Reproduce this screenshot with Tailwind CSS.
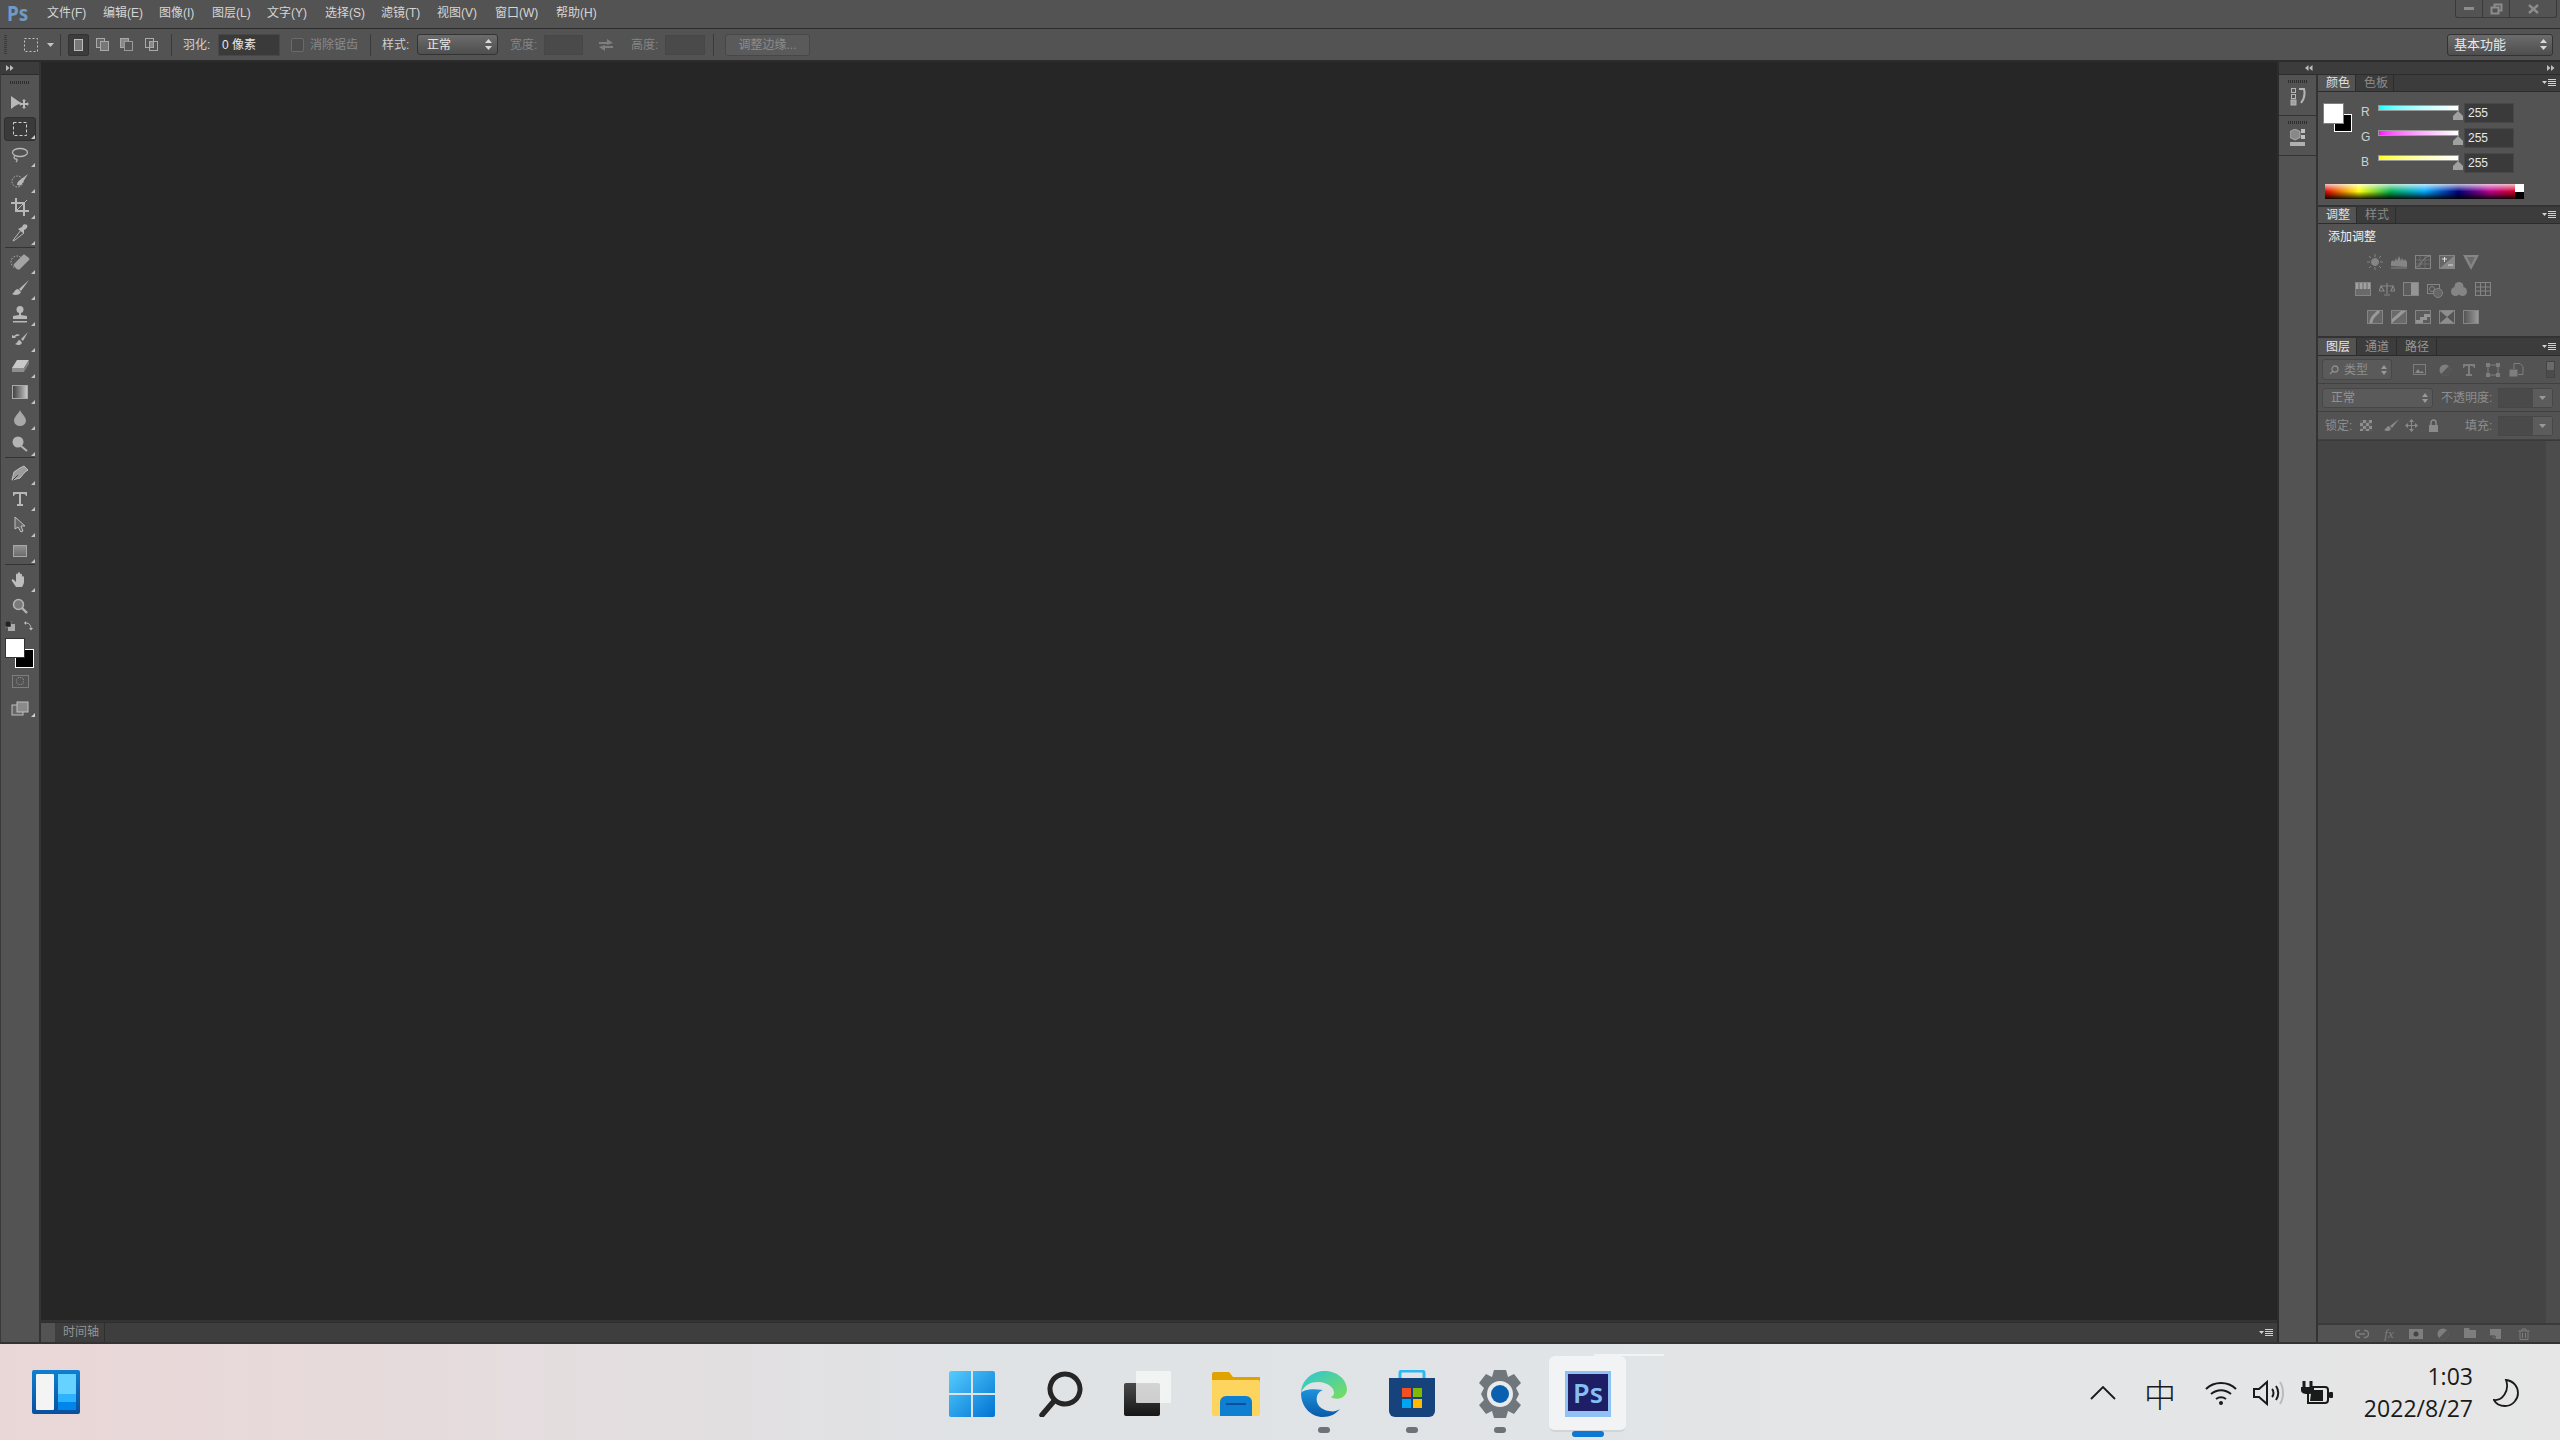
<!DOCTYPE html>
<html lang="zh-CN">
<head>
<meta charset="UTF-8">
<title>Photoshop</title>
<script src="https://cdn.jsdelivr.net/npm/@tailwindcss/browser@4"></script>
</head>
<body class="w-[2560px] h-[1440px] overflow-hidden bg-[#262626] font-['Liberation_Sans','Noto_Sans_CJK_SC',sans-serif] text-[12px] text-[#c8c8c8]">
<div class="flex flex-col h-full">

  <!-- title bar -->
  <header class="relative h-[29px] shrink-0 flex items-start bg-[#535353] border-b border-[#2c2c2c]">
    <span class="ml-[7px] w-[40px] leading-[26px] text-[21px] font-bold text-[#6f9cc4] font-['Noto_Sans',sans-serif] scale-x-90 origin-left">Ps</span>
    <nav class="flex leading-[27px] text-[#d6d6d6]">
      <span class="w-[56px]">文件(F)</span>
      <span class="w-[56px]">编辑(E)</span>
      <span class="w-[53px]">图像(I)</span>
      <span class="w-[55px]">图层(L)</span>
      <span class="w-[58px]">文字(Y)</span>
      <span class="w-[56px]">选择(S)</span>
      <span class="w-[56px]">滤镜(T)</span>
      <span class="w-[58px]">视图(V)</span>
      <span class="w-[61px]">窗口(W)</span>
      <span>帮助(H)</span>
    </nav>
    <div class="ml-auto mr-[3px] w-[102px] h-[18px] flex border border-t-0 border-[#3a3a3a] rounded-b-[3px]">
      <div class="w-[27px] flex items-center justify-center border-r border-[#3a3a3a]"><div class="w-[10px] h-[3px] bg-[#8c8c8c]"></div></div>
      <div class="w-[27px] flex items-center justify-center border-r border-[#3a3a3a]">
        <svg width="13" height="12" viewBox="0 0 13 12" fill="none" stroke="#8c8c8c" stroke-width="2"><rect x="4.5" y="1.5" width="7" height="6"/><rect x="1.5" y="4.5" width="7" height="6" fill="#535353"/></svg>
      </div>
      <div class="flex-1 flex items-center justify-center">
        <svg width="11" height="10" viewBox="0 0 11 10" stroke="#8c8c8c" stroke-width="2.4"><path d="M1 1l9 8M10 1l-9 8"/></svg>
      </div>
    </div>
  </header>

  <!-- options bar -->
  <div class="h-[33px] shrink-0 flex items-center bg-[#535353] border-b-2 border-[#2c2c2c] text-[#d0d0d0]">
    <div class="ml-[4px] w-[3px] h-[20px] bg-[repeating-linear-gradient(180deg,#3a3a3a_0,#3a3a3a_1px,transparent_1px,transparent_2px)]"></div>
    <svg class="ml-[17px]" width="14" height="14" viewBox="0 0 14 14" fill="none" stroke="#c4c4c4" stroke-dasharray="2 2"><rect x=".5" y=".5" width="13" height="13"/></svg>
    <svg class="ml-[9px]" width="7" height="4" viewBox="0 0 7 4"><path d="M0 0h7L3.500 4z" fill="#c4c4c4"/></svg>
    <div class="ml-[6px] w-px h-[22px] bg-[#3a3a3a]"></div>
    <div class="ml-[7px] w-[21px] h-[22px] flex items-center justify-center bg-[#3c3c3c] rounded-[2px] border border-[#333]">
      <div class="w-[9px] h-[12px] bg-[#777] border border-[#bbb]"></div>
    </div>
    <svg class="ml-[7px]" width="14" height="14" viewBox="0 0 14 14"><rect x=".5" y=".5" width="8" height="9" fill="#666" stroke="#aaa"/><rect x="4.500" y="3.500" width="8" height="9" fill="#777" stroke="#aaa"/></svg>
    <svg class="ml-[10px]" width="14" height="14" viewBox="0 0 14 14"><rect x=".5" y=".5" width="8" height="9" fill="#888" stroke="#aaa"/><rect x="4.500" y="3.500" width="8" height="9" fill="#555" stroke="#999"/></svg>
    <svg class="ml-[11px]" width="14" height="14" viewBox="0 0 14 14" fill="none" stroke="#aaa"><rect x=".5" y=".5" width="8" height="9"/><rect x="4.500" y="3.500" width="8" height="9"/><rect x="5" y="4" width="3" height="5" fill="#888" stroke="none"/></svg>
    <div class="ml-[12px] w-px h-[22px] bg-[#3a3a3a]"></div>
    <span class="ml-[11px] w-[35px]">羽化:</span>
    <div class="w-[62px] h-[22px] flex items-center pl-[3px] bg-[#3a3a3a] border border-[#474747] text-[#e8e8e8]">0 像素</div>
    <div class="ml-[11px] w-[13px] h-[14px] rounded-[2px] border border-[#6a6a6a] bg-[#4c4c4c]"></div>
    <span class="ml-[6px] w-[48px] whitespace-nowrap text-[#8a8a8a]">消除锯齿</span>
    <div class="ml-[12px] w-px h-[22px] bg-[#3a3a3a]"></div>
    <span class="ml-[11px] w-[35px]">样式:</span>
    <div class="w-[81px] h-[21px] flex items-center justify-between px-[9px] pr-[5px] rounded-[3px] border border-[#333] bg-linear-to-b from-[#6c6c6c] to-[#4e4e4e] text-[#e8e8e8]">
      <span>正常</span>
      <svg width="7" height="11" viewBox="0 0 7 11" fill="#d8d8d8"><path d="M3.500 0L7 4H0zM3.500 11L0 7h7z"/></svg>
    </div>
    <span class="ml-[12px] w-[34px] text-[#858585]">宽度:</span>
    <div class="w-[39px] h-[20px] bg-[#4a4a4a] border border-[#474747]"></div>
    <svg class="ml-[16px]" width="14" height="18" viewBox="0 0 14 18" fill="#7e7e7e"><path d="M0 6h8V3l6 4-6 2V8H0zM14 12H6v3L0 11l6-2v1h8z"/></svg>
    <span class="ml-[18px] w-[34px] text-[#858585]">高度:</span>
    <div class="w-[40px] h-[20px] bg-[#4a4a4a] border border-[#474747]"></div>
    <div class="ml-[8px] w-px h-[22px] bg-[#3a3a3a]"></div>
    <div class="ml-[11px] w-[85px] h-[22px] flex items-center justify-center rounded-[3px] border border-[#474747] bg-[#5a5a5a] text-[#8c8c8c]">调整边缘...</div>
    <div class="ml-auto mr-[7px] w-[106px] h-[22px] flex items-center justify-between pl-[6px] pr-[5px] rounded-[3px] border border-[#333] bg-linear-to-b from-[#6c6c6c] to-[#4e4e4e] text-[#e8e8e8] text-[13px]">
      <span>基本功能</span>
      <svg width="7" height="11" viewBox="0 0 7 11" fill="#d8d8d8"><path d="M3.500 0L7 4H0zM3.500 11L0 7h7z"/></svg>
    </div>
  </div>

  <!-- workspace -->
  <main class="h-[1282px] shrink-0 flex pb-[2px] bg-[#333]">

    <!-- tools -->
    <aside class="w-[41px] shrink-0 flex flex-col bg-[#535353] border-l border-[#3a3a3a] border-r-2 border-r-[#333] text-[#b8b8b8]">
      <div class="h-[13px] shrink-0 pl-[5px] pt-[3px] bg-[#3c3c3c] border-b border-[#2c2c2c]">
        <svg width="8" height="6" viewBox="0 0 8 6" fill="#bdbdbd"><path d="M0 0l3.500 3L0 6zM4 0l3.500 3L4 6z"/></svg>
      </div>
      <div class="h-[15px] shrink-0 flex items-center justify-center"><div class="w-[20px] h-[3px] bg-[repeating-linear-gradient(90deg,#2e2e2e_0,#2e2e2e_1px,transparent_1px,transparent_2px)]"></div></div>

      <div class="h-[26px] flex items-center justify-center">
        <svg width="20" height="16" viewBox="0 0 20 16" fill="#b8b8b8"><path d="M1 1l0 13 4-3 6-3z"/><path d="M14 4l2 2h-1v2h2V7l2 2-2 2v-1h-2v2h1l-2 2-2-2h1v-2h-2v1l-2-2 2-2v1h2V6h-1z"/></svg>
      </div>
      <div class="relative h-[26px] flex items-center justify-center">
        <div class="w-[32px] h-[24px] rounded-[3px] bg-[#3a3a3a] border border-[#2f2f2f] flex items-center justify-center">
          <svg width="14" height="14" viewBox="0 0 14 14" fill="none" stroke="#d0d0d0" stroke-width="1" stroke-dasharray="3 2"><rect x=".5" y=".5" width="13" height="13"/></svg>
        </div>
        <svg class="absolute right-[4px] bottom-[3px]" width="4" height="4" viewBox="0 0 4 4"><path d="M4 0v4H0z" fill="#d0d0d0"/></svg>
      </div>
      <div class="relative h-[26px] flex items-center justify-center">
        <svg width="18" height="16" viewBox="0 0 18 16" fill="none" stroke="#b8b8b8" stroke-width="1.300"><ellipse cx="9" cy="5.500" rx="7.500" ry="4"/><path d="M4 9c-2 1-1 3 1 3s1 2 0 3"/></svg>
        <svg class="absolute right-[4px] bottom-[1px]" width="4" height="4" viewBox="0 0 4 4"><path d="M4 0v4H0z" fill="#c4c4c4"/></svg>
      </div>
      <div class="relative h-[26px] flex items-center justify-center">
        <svg width="18" height="16" viewBox="0 0 18 16"><circle cx="6.500" cy="8.500" r="5.500" fill="none" stroke="#b8b8b8" stroke-dasharray="1.500 1.500"/><path d="M17 1L9 7c-2 1-3 3-3 5 3 1 5 0 6-3z" fill="#b8b8b8"/></svg>
        <svg class="absolute right-[4px] bottom-[1px]" width="4" height="4" viewBox="0 0 4 4"><path d="M4 0v4H0z" fill="#c4c4c4"/></svg>
      </div>
      <div class="relative h-[26px] flex items-center justify-center">
        <svg width="18" height="18" viewBox="0 0 18 18" fill="none" stroke="#b8b8b8" stroke-width="2"><path d="M5 0v13h13M0 5h13v13"/><path d="M5 13L16 2" stroke-width="1"/></svg>
        <svg class="absolute right-[4px] bottom-[1px]" width="4" height="4" viewBox="0 0 4 4"><path d="M4 0v4H0z" fill="#c4c4c4"/></svg>
      </div>
      <div class="relative h-[26px] flex items-center justify-center">
        <svg width="16" height="18" viewBox="0 0 16 18"><path d="M9 6l-7 9-1 2 2-1 9-7z" fill="none" stroke="#b8b8b8"/><path d="M8 4l2-1 1-2c1-1 3-1 4 0s0 3-1 4l-2 1 0 2-1 1-5-4z" fill="#b8b8b8"/></svg>
        <svg class="absolute right-[4px] bottom-[1px]" width="4" height="4" viewBox="0 0 4 4"><path d="M4 0v4H0z" fill="#c4c4c4"/></svg>
      </div>
      <div class="h-[3px] flex items-end pb-[1px] px-[4px]"><div class="w-full h-px bg-[#333]"></div></div>

      <div class="relative h-[26px] flex items-center justify-center">
        <svg width="20" height="16" viewBox="0 0 20 16"><circle cx="7" cy="8" r="6" fill="none" stroke="#b8b8b8" stroke-dasharray="1.500 1.500"/><path d="M15 1l4 3c1 1 0 2-1 3l-8 8c-1 1-2 1-3 0l-3-3c-1-1 0-2 1-3l7-7c1-1 2-2 3-1z" fill="#a4a4a4"/></svg>
        <svg class="absolute right-[4px] bottom-[1px]" width="4" height="4" viewBox="0 0 4 4"><path d="M4 0v4H0z" fill="#c4c4c4"/></svg>
      </div>
      <div class="relative h-[26px] flex items-center justify-center">
        <svg width="20" height="16" viewBox="0 0 20 16" fill="#b8b8b8"><path d="M19 0l-10 9 2 2z"/><path d="M8 9c-3 0-3 3-6 5 3 2 8 1 9-2z"/></svg>
        <svg class="absolute right-[4px] bottom-[1px]" width="4" height="4" viewBox="0 0 4 4"><path d="M4 0v4H0z" fill="#c4c4c4"/></svg>
      </div>
      <div class="relative h-[26px] flex items-center justify-center">
        <svg width="16" height="17" viewBox="0 0 16 17" fill="#b8b8b8"><circle cx="8" cy="3.500" r="3.500"/><path d="M7 6h2v3l6 1v3H1v-3l6-1zM1 15h14v1.500H1z"/></svg>
        <svg class="absolute right-[4px] bottom-[1px]" width="4" height="4" viewBox="0 0 4 4"><path d="M4 0v4H0z" fill="#c4c4c4"/></svg>
      </div>
      <div class="relative h-[26px] flex items-center justify-center">
        <svg width="18" height="16" viewBox="0 0 18 16" fill="#b8b8b8"><path d="M17 0l-7 7 2 2zM9 8c-3 0-2 3-5 4 3 2 6 1 7-1z"/><path d="M1 3l2 1c2-2 4-2 6-1l-2 1c-1 0-2 0-3 1l1 1-4 0z"/></svg>
        <svg class="absolute right-[4px] bottom-[1px]" width="4" height="4" viewBox="0 0 4 4"><path d="M4 0v4H0z" fill="#c4c4c4"/></svg>
      </div>
      <div class="relative h-[26px] flex items-center justify-center">
        <svg width="18" height="14" viewBox="0 0 18 14"><path d="M6 1h12l-5 8H1z" fill="#c8c8c8"/><path d="M1 9h12v4H1z" fill="#8e8e8e"/><path d="M13 9l5-8v4l-5 8z" fill="#7e7e7e"/></svg>
        <svg class="absolute right-[4px] bottom-[1px]" width="4" height="4" viewBox="0 0 4 4"><path d="M4 0v4H0z" fill="#c4c4c4"/></svg>
      </div>
      <div class="relative h-[26px] flex items-center justify-center">
        <div class="w-[16px] h-[14px] border border-[#aaa] bg-linear-to-r from-[#444] to-[#c8c8c8]"></div>
        <svg class="absolute right-[4px] bottom-[1px]" width="4" height="4" viewBox="0 0 4 4"><path d="M4 0v4H0z" fill="#c4c4c4"/></svg>
      </div>
      <div class="relative h-[26px] flex items-center justify-center">
        <svg width="12" height="16" viewBox="0 0 12 16"><path d="M6 0c1 3 6 7 6 10.500A6 5.500 0 0 1 0 10.500C0 7 5 3 6 0z" fill="#a8a8a8"/></svg>
        <svg class="absolute right-[4px] bottom-[1px]" width="4" height="4" viewBox="0 0 4 4"><path d="M4 0v4H0z" fill="#c4c4c4"/></svg>
      </div>
      <div class="relative h-[26px] flex items-center justify-center">
        <svg width="16" height="16" viewBox="0 0 16 16"><circle cx="6" cy="6" r="5.500" fill="#b4b4b4"/><path d="M9 10l6 5" stroke="#b4b4b4" stroke-width="2"/></svg>
        <svg class="absolute right-[4px] bottom-[1px]" width="4" height="4" viewBox="0 0 4 4"><path d="M4 0v4H0z" fill="#c4c4c4"/></svg>
      </div>
      <div class="h-[3px] flex items-start px-[4px]"><div class="w-full h-px bg-[#333]"></div></div>

      <div class="relative h-[26px] flex items-center justify-center">
        <svg width="18" height="16" viewBox="0 0 18 16"><path d="M13 1l4 4-3 2-5 6-8 2 2-8 6-4z" fill="#9c9c9c" stroke="#c0c0c0"/><path d="M2 15l5-5" stroke="#444"/></svg>
        <svg class="absolute right-[4px] bottom-[1px]" width="4" height="4" viewBox="0 0 4 4"><path d="M4 0v4H0z" fill="#c4c4c4"/></svg>
      </div>
      <div class="relative h-[26px] flex items-center justify-center">
        <svg width="14" height="14" viewBox="0 0 14 14" fill="#b8b8b8"><path d="M0 0h14v4h-1c0-1-1-2-2-2H8v10h2v2H4v-2h2V2H3C2 2 1 3 1 4H0z"/></svg>
        <svg class="absolute right-[4px] bottom-[1px]" width="4" height="4" viewBox="0 0 4 4"><path d="M4 0v4H0z" fill="#c4c4c4"/></svg>
      </div>
      <div class="relative h-[26px] flex items-center justify-center">
        <svg width="12" height="16" viewBox="0 0 12 16"><path d="M1 0l10 9H7l2 5-2 1-3-5-3 2z" fill="#666" stroke="#c0c0c0"/></svg>
        <svg class="absolute right-[4px] bottom-[1px]" width="4" height="4" viewBox="0 0 4 4"><path d="M4 0v4H0z" fill="#c4c4c4"/></svg>
      </div>
      <div class="relative h-[26px] flex items-center justify-center">
        <div class="w-[14px] h-[12px] border border-[#a8a8a8] bg-linear-to-b from-[#909090] to-[#6c6c6c]"></div>
        <svg class="absolute right-[4px] bottom-[1px]" width="4" height="4" viewBox="0 0 4 4"><path d="M4 0v4H0z" fill="#c4c4c4"/></svg>
      </div>
      <div class="h-[3px] flex items-start px-[4px]"><div class="w-full h-px bg-[#333]"></div></div>

      <div class="relative h-[26px] flex items-center justify-center">
        <svg width="18" height="16" viewBox="0 0 18 16" fill="#bdbdbd"><path d="M5 15L1 9c-1-2 1-2 2-1l2 2 0-7c0-2 2-2 2 0V1c0-1 2-1 2 0v2c0-2 2-1 2 0v2c0-1 2-1 2 0v5c0 2-1 3-2 5z"/></svg>
        <svg class="absolute right-[4px] bottom-[1px]" width="4" height="4" viewBox="0 0 4 4"><path d="M4 0v4H0z" fill="#c4c4c4"/></svg>
      </div>
      <div class="h-[26px] flex items-center justify-center">
        <svg width="16" height="16" viewBox="0 0 16 16"><circle cx="6.500" cy="6.500" r="5" fill="#7a7a7a" stroke="#b4b4b4" stroke-width="1.500"/><path d="M10 10l5 5" stroke="#b4b4b4" stroke-width="2.400"/></svg>
      </div>
      <div class="h-[14px] shrink-0 flex justify-between items-center pl-[4px] pr-[6px]">
        <svg width="10" height="10" viewBox="0 0 10 10"><rect x="3" y="3" width="7" height="7" fill="#aaa"/><rect x="0" y="0" width="6" height="6" fill="#222" stroke="#aaa" stroke-width=".5"/></svg>
        <svg width="9" height="10" viewBox="0 0 9 10" fill="none" stroke="#c0c0c0"><path d="M2 2c3 0 5 2 5 6"/><path d="M0 2l2-2v4zM5 7h4L7 9.500z" fill="#c0c0c0" stroke="none"/></svg>
      </div>
      <div class="relative h-[36px] shrink-0">
        <div class="absolute left-[14px] top-[16px] w-[19px] h-[19px] bg-black border border-white"></div>
        <div class="absolute left-[4px] top-[5px] w-[20px] h-[20px] bg-white border border-[#333]"></div>
      </div>
      <div class="h-[24px] shrink-0 flex items-center justify-center">
        <div class="w-[17px] h-[13px] border border-[#7e7e7e] flex items-center justify-center"><div class="w-[8px] h-[8px] rounded-full border border-dotted border-[#9a9a9a]"></div></div>
      </div>
      <div class="relative h-[30px] shrink-0 flex items-center justify-center">
        <svg width="18" height="15" viewBox="0 0 18 15"><rect x="1" y="4" width="11" height="10" fill="#666" stroke="#c0c0c0"/><rect x="6" y="1" width="11" height="10" fill="#8a8a8a" stroke="#c0c0c0"/></svg>
        <svg class="absolute right-[4px] bottom-[6px]" width="4" height="4" viewBox="0 0 4 4"><path d="M4 0v4H0z" fill="#d0d0d0"/></svg>
      </div>
    </aside>

    <!-- canvas + timeline -->
    <section class="flex-1 min-w-0 flex flex-col border-r-2 border-[#2c2c2c]">
      <div class="flex-1 bg-[#262626] border-b-2 border-[#333]"></div>
      <div class="h-[20px] shrink-0 flex items-stretch bg-[#3e3e3e] border-t border-[#2f2f2f]">
        <div class="w-[14px] bg-[#535353]"></div>
        <div class="w-[50px] pl-[8px] leading-[18px] bg-[#3e3e3e] border-r border-[#2f2f2f] text-[#949494]">时间轴</div>
        <svg class="ml-auto mr-[4px] self-center" width="14" height="8" viewBox="0 0 14 8" fill="#d0d0d0"><path d="M0 2h5L2.500 5zM6 0h8v1H6zM6 2h8v1H6zM6 4h8v1H6zM6 6h8v1H6z"/></svg>
      </div>
    </section>

    <!-- right dock -->
    <aside class="w-[281px] shrink-0 flex flex-col bg-[#333] text-[#d0d0d0]">
      <div class="h-[13px] shrink-0 flex items-center justify-between pl-[26px] pr-[5px] bg-[#3c3c3c] border-b border-[#2c2c2c]">
        <svg width="8" height="6" viewBox="0 0 8 6" fill="#bdbdbd"><path d="M3.500 0v6L0 3zM7.500 0v6L4 3z"/></svg>
        <svg width="8" height="6" viewBox="0 0 8 6" fill="#bdbdbd"><path d="M0 0l3.500 3L0 6zM4 0l3.500 3L4 6z"/></svg>
      </div>
      <div class="flex-1 min-h-0 flex">

        <!-- collapsed icons -->
        <div class="w-[39px] shrink-0 flex flex-col bg-[#535353] border-r-2 border-[#333]">
          <div class="h-[41px] border-b border-[#333] flex flex-col items-center pt-[5px] gap-[5px]">
            <div class="w-[20px] h-[3px] bg-[repeating-linear-gradient(90deg,#2e2e2e_0,#2e2e2e_1px,transparent_1px,transparent_2px)]"></div>
            <svg width="16" height="18" viewBox="0 0 16 18" fill="none" stroke="#b4b4b4"><rect x="1.500" y=".5" width="4" height="4"/><rect x="1.500" y="6.500" width="4" height="4"/><rect x="1" y="12" width="5" height="5" fill="#a0a0a0"/><path d="M9 1h5c1 4 1 9-3 14" stroke-width="2"/></svg>
          </div>
          <div class="h-[40px] border-b border-[#333] flex flex-col items-center pt-[5px] gap-[5px]">
            <div class="w-[20px] h-[3px] bg-[repeating-linear-gradient(90deg,#2e2e2e_0,#2e2e2e_1px,transparent_1px,transparent_2px)]"></div>
            <svg width="16" height="18" viewBox="0 0 16 18"><path d="M5 0l5 2.500v6L5 11 0 8.500v-6z" fill="#888" stroke="#c0c0c0" stroke-width=".7"/><rect x="11" y="0" width="4" height="4" fill="#c0c0c0"/><rect x="11" y="6" width="4" height="4" fill="#c0c0c0"/><rect x="0" y="13" width="15" height="4" fill="#b0b0b0"/></svg>
          </div>
        </div>

        <div class="flex-1 min-w-0 flex flex-col gap-[2px]">

          <!-- colour panel -->
          <div class="h-[130px] shrink-0 flex flex-col bg-[#535353]">
            <div class="h-[17px] shrink-0 flex bg-[#3c3c3c] border-b border-[#2c2c2c]">
              <div class="w-[38px] pl-[8px] leading-[17px] bg-[#535353] text-[#e0e0e0] border-r border-[#2c2c2c]">颜色</div>
              <div class="w-[38px] pl-[8px] leading-[17px] text-[#8a8a8a] border-r border-[#2c2c2c]">色板</div>
              <svg class="ml-auto mr-[4px] self-center" width="14" height="8" viewBox="0 0 14 8" fill="#d0d0d0"><path d="M0 2h5L2.500 5zM6 0h8v1H6zM6 2h8v1H6zM6 4h8v1H6zM6 6h8v1H6z"/></svg>
            </div>
            <div class="relative flex-1 pl-[43px] pt-[11px] flex flex-col gap-[5px]">
              <div class="absolute left-[16px] top-[22px] w-[18px] h-[18px] bg-black border border-white"></div>
              <div class="absolute left-[5px] top-[11px] w-[21px] h-[21px] bg-white border border-[#808080]"></div>

              <div class="h-[20px] flex items-center">
                <span class="w-[17px] -mt-[3px]">R</span>
                <div class="relative self-start mt-[2px] w-[81px] h-[6px] border border-[#999] bg-linear-to-r from-[#00ffff] to-white">
                  <svg class="absolute -right-[5px] top-[5px]" width="10" height="9" viewBox="0 0 10 9"><path d="M5 0l5 5v4H0V5z" fill="#a0a0a0"/></svg>
                </div>
                <div class="ml-[5px] w-[50px] h-[20px] flex items-center pl-[3px] bg-[#3a3a3a] border border-[#474747] text-[#e8e8e8]">255</div>
              </div>
              <div class="h-[20px] flex items-center">
                <span class="w-[17px] -mt-[3px]">G</span>
                <div class="relative self-start mt-[2px] w-[81px] h-[6px] border border-[#999] bg-linear-to-r from-[#ff00ff] to-white">
                  <svg class="absolute -right-[5px] top-[5px]" width="10" height="9" viewBox="0 0 10 9"><path d="M5 0l5 5v4H0V5z" fill="#a0a0a0"/></svg>
                </div>
                <div class="ml-[5px] w-[50px] h-[20px] flex items-center pl-[3px] bg-[#3a3a3a] border border-[#474747] text-[#e8e8e8]">255</div>
              </div>
              <div class="h-[20px] flex items-center">
                <span class="w-[17px] -mt-[3px]">B</span>
                <div class="relative self-start mt-[2px] w-[81px] h-[6px] border border-[#999] bg-linear-to-r from-[#ffff00] to-white">
                  <svg class="absolute -right-[5px] top-[5px]" width="10" height="9" viewBox="0 0 10 9"><path d="M5 0l5 5v4H0V5z" fill="#a0a0a0"/></svg>
                </div>
                <div class="ml-[5px] w-[50px] h-[20px] flex items-center pl-[3px] bg-[#3a3a3a] border border-[#474747] text-[#e8e8e8]">255</div>
              </div>
              <div class="absolute left-[7px] top-[92px] w-[199px] h-[15px] flex bg-[linear-gradient(90deg,#e00000_0%,#ffff00_17%,#00b050_33%,#00aaff_50%,#000080_67%,#c00090_83%,#e00000_100%)]">
                <div class="flex-1 bg-[linear-gradient(180deg,rgba(255,255,255,.75)_0%,rgba(255,255,255,0)_50%,rgba(0,0,0,0)_50%,rgba(0,0,0,.9)_100%)]"></div>
                <div class="w-[9px] flex flex-col"><div class="flex-1 bg-white"></div><div class="flex-1 bg-black"></div></div>
              </div>
            </div>
          </div>

          <!-- adjustments panel -->
          <div class="h-[129px] shrink-0 flex flex-col bg-[#535353]">
            <div class="h-[17px] shrink-0 flex bg-[#3c3c3c] border-b border-[#2c2c2c]">
              <div class="w-[39px] pl-[8px] leading-[17px] bg-[#535353] text-[#e0e0e0] border-r border-[#2c2c2c]">调整</div>
              <div class="w-[39px] pl-[8px] leading-[17px] text-[#8a8a8a] border-r border-[#2c2c2c]">样式</div>
              <svg class="ml-auto mr-[4px] self-center" width="14" height="8" viewBox="0 0 14 8" fill="#d0d0d0"><path d="M0 2h5L2.500 5zM6 0h8v1H6zM6 2h8v1H6zM6 4h8v1H6zM6 6h8v1H6z"/></svg>
            </div>
            <div class="pl-[10px] pt-[5px] leading-[16px] text-[#f0f0f0]">添加调整</div>
            <div class="w-[210px] mt-[9px] flex flex-col items-center gap-[12px]">
              <div class="flex gap-[8px]">
                <svg width="16" height="16" viewBox="0 0 16 16" fill="none" stroke="#858585"><circle cx="8" cy="8" r="3.500" fill="#858585"/><path d="M8 0v3M8 13v3M0 8h3M13 8h3M2 2l2 2M12 12l2 2M14 2l-2 2M2 14l2-2"/></svg>
                <svg width="16" height="16" viewBox="0 0 16 16"><path d="M0 12V8l2-2 1 2 2-4 1 3 2-5 2 5 1-3 2 3 1-2 2 3v5z" fill="#858585"/><path d="M0 14h16" stroke="#858585"/></svg>
                <svg width="16" height="16" viewBox="0 0 16 16" fill="none" stroke="#858585"><rect x=".5" y="1.500" width="15" height="13"/><path d="M1 13c6 0 5-10 14-11"/><path d="M5 2v12M10 2v12M1 6h14M1 10h14" stroke-opacity=".5"/></svg>
                <svg width="16" height="16" viewBox="0 0 16 16"><rect x=".5" y="1.500" width="15" height="13" fill="#666" stroke="#858585"/><path d="M1 14L15 2v12z" fill="#888"/><path d="M3 5h5M5.500 3v5M9 11h5" stroke="#ddd"/></svg>
                <svg width="16" height="16" viewBox="0 0 16 16"><path d="M0 1h16L8 16z" fill="#858585"/><path d="M4 3h8L8 11z" fill="#6a6a6a"/></svg>
              </div>
              <div class="flex gap-[8px]">
                <svg width="16" height="14" viewBox="0 0 16 14"><rect x=".5" y=".5" width="15" height="13" fill="#6a6a6a" stroke="#858585"/><path d="M1 1h14v6H1z" fill="#a0a0a0"/><path d="M4 1v6M8 1v6M12 1v6" stroke="#666"/></svg>
                <svg width="16" height="14" viewBox="0 0 16 14" fill="none" stroke="#858585"><path d="M8 1v11M5 13h6M2 4h12M2 4L0 9h5zM14 4l-2 5h4z" stroke-width="1.200"/></svg>
                <svg width="16" height="14" viewBox="0 0 16 14"><rect x=".5" y=".5" width="15" height="13" fill="#5c5c5c" stroke="#858585"/><rect x="8" y="1" width="7" height="12" fill="#959595"/></svg>
                <svg width="16" height="16" viewBox="0 0 16 16" fill="none" stroke="#858585"><rect x=".5" y="2.500" width="12" height="9"/><circle cx="5" cy="7" r="2.500"/><circle cx="11" cy="11" r="4.500" fill="#666"/></svg>
                <svg width="16" height="14" viewBox="0 0 16 14" fill="#858585"><circle cx="8" cy="4.500" r="4.500"/><circle cx="4.500" cy="9.500" r="4.500"/><circle cx="11.500" cy="9.500" r="4.500"/></svg>
                <svg width="16" height="14" viewBox="0 0 16 14" fill="none" stroke="#858585"><rect x=".5" y=".5" width="15" height="13"/><path d="M5.500 1v12M10.500 1v12M1 5h14M1 9h14"/></svg>
              </div>
              <div class="flex gap-[8px]">
                <svg width="16" height="14" viewBox="0 0 16 14"><rect x=".5" y=".5" width="15" height="13" fill="#666" stroke="#858585"/><path d="M4 13c0-5 3-7 8-12" stroke="#999" stroke-width="3" fill="none"/></svg>
                <svg width="16" height="14" viewBox="0 0 16 14"><rect x=".5" y=".5" width="15" height="13" fill="#6a6a6a" stroke="#858585"/><path d="M1 9L10 1h5L1 13z" fill="#9a9a9a"/></svg>
                <svg width="16" height="14" viewBox="0 0 16 14"><rect x=".5" y=".5" width="15" height="13" fill="#5c5c5c" stroke="#858585"/><path d="M1 13v-3h4V7h4V4h6v3h-3v3H8v3z" fill="#959595"/></svg>
                <svg width="16" height="14" viewBox="0 0 16 14"><rect x=".5" y=".5" width="15" height="13" fill="#8e8e8e" stroke="#858585"/><path d="M1 1l7 6-7 6zM15 1L8 7l7 6z" fill="#555"/></svg>
                <div class="w-[16px] h-[14px] border border-[#858585] bg-linear-to-r from-[#555] to-[#9a9a9a]"></div>
              </div>
            </div>
          </div>

          <!-- layers panel -->
          <div class="flex-1 min-h-0 flex flex-col bg-[#535353]">
            <div class="h-[18px] shrink-0 flex bg-[#3c3c3c] border-b border-[#2c2c2c]">
              <div class="w-[39px] pl-[8px] leading-[18px] bg-[#535353] text-[#e8e8e8] border-r border-[#2c2c2c]">图层</div>
              <div class="w-[40px] pl-[8px] leading-[18px] text-[#969696] border-r border-[#2c2c2c]">通道</div>
              <div class="w-[40px] pl-[8px] leading-[18px] text-[#969696] border-r border-[#2c2c2c]">路径</div>
              <svg class="ml-auto mr-[4px] self-center" width="14" height="8" viewBox="0 0 14 8" fill="#d0d0d0"><path d="M0 2h5L2.500 5zM6 0h8v1H6zM6 2h8v1H6zM6 4h8v1H6zM6 6h8v1H6z"/></svg>
            </div>
            <div class="h-[28px] shrink-0 flex items-center pl-[4px] border-b border-[#414141]">
              <div class="w-[70px] h-[21px] flex items-center rounded-[3px] border border-[#474747] bg-[#5a5a5a] pl-[6px] pr-[4px] text-[#8e8e8e]">
                <svg width="10" height="10" viewBox="0 0 10 10" fill="none" stroke="#8e8e8e" stroke-width="1.300"><circle cx="6" cy="4" r="3"/><path d="M4 6L1 9"/></svg>
                <span class="ml-[5px]">类型</span>
                <svg class="ml-auto" width="6" height="10" viewBox="0 0 6 10" fill="#999"><path d="M3 0l3 4H0zM3 10L0 6h6z"/></svg>
              </div>
              <div class="ml-[21px] flex gap-[8px]">
                <svg width="16" height="14" viewBox="0 0 16 14"><rect x=".5" y="1.500" width="12" height="10" fill="#555" stroke="#7e7e7e"/><path d="M2 10l3-4 2 3 2-1 2 2z" fill="#8a8a8a"/></svg>
                <svg width="16" height="14" viewBox="0 0 16 14"><circle cx="8" cy="7" r="5.500" fill="#7e7e7e"/><path d="M4 11L12 3A5.500 5.500 0 0 1 4 11z" fill="#555"/></svg>
                <svg width="16" height="14" viewBox="0 0 16 14" fill="#7e7e7e"><path d="M2 1h12v4h-1c0-1-1-2-2-2H9v8h2v2H5v-2h2V3H5C4 3 3 4 3 5H2z"/></svg>
                <svg width="16" height="14" viewBox="0 0 16 14" fill="none" stroke="#7e7e7e"><rect x="3" y="2" width="10" height="10"/><rect x="1.500" y=".5" width="3" height="3" fill="#7e7e7e"/><rect x="11.500" y=".5" width="3" height="3" fill="#7e7e7e"/><rect x="1.500" y="10.500" width="3" height="3" fill="#7e7e7e"/><rect x="11.500" y="10.500" width="3" height="3" fill="#7e7e7e"/></svg>
                <svg width="16" height="14" viewBox="0 0 16 14" fill="none" stroke="#7e7e7e"><path d="M5 6V.5h6l3 3v8H9"/><rect x="1" y="7" width="7" height="6" fill="#7e7e7e"/></svg>
              </div>
              <div class="ml-auto mr-[5px] w-[9px] h-[17px] flex flex-col border border-[#444]"><div class="flex-1 bg-[#6a6a6a]"></div><div class="flex-1 bg-[#4c4c4c]"></div></div>
            </div>
            <div class="h-[28px] shrink-0 flex items-center pl-[4px] border-b border-[#414141]">
              <div class="w-[111px] h-[20px] flex items-center justify-between rounded-[3px] border border-[#474747] bg-[#5a5a5a] pl-[8px] pr-[4px] text-[#969696]">
                <span>正常</span>
                <svg width="6" height="10" viewBox="0 0 6 10" fill="#999"><path d="M3 0l3 4H0zM3 10L0 6h6z"/></svg>
              </div>
              <span class="ml-[8px] w-[57px] text-[#8e8e8e]">不透明度:</span>
              <div class="w-[55px] h-[20px] flex border border-[#474747] rounded-r-[3px]">
                <div class="flex-1 bg-[#4a4a4a]"></div>
                <div class="w-[19px] flex items-center justify-center bg-[#5c5c5c]"><svg width="7" height="4" viewBox="0 0 7 4"><path d="M0 0h7L3.500 4z" fill="#999"/></svg></div>
              </div>
            </div>
            <div class="h-[28px] shrink-0 flex items-center pl-[7px] border-b border-[#414141]">
              <span class="w-[35px] text-[#8e8e8e]">锁定:</span>
              <div class="w-[12px] h-[11px] bg-[conic-gradient(#8e8e8e_25%,#5c5c5c_0_50%,#8e8e8e_0_75%,#5c5c5c_0)] bg-[length:6px_6px]"></div>
              <svg class="ml-[11px]" width="16" height="13" viewBox="0 0 16 13" fill="#8a8a8a"><path d="M16 0L7 7l2 2zM6 7c-2 0-2 2-5 4 3 2 6 1 7-1z"/></svg>
              <svg class="ml-[6px]" width="13" height="13" viewBox="0 0 13 13" fill="#8a8a8a"><path d="M6.500 0L9 3H7v3h3V4l3 2.500L10 9V7H7v3h2l-2.500 3L4 10h2V7H3v2L0 6.500 3 4v2h3V3H4z"/></svg>
              <svg class="ml-[10px]" width="11" height="13" viewBox="0 0 11 13"><path d="M3 6V3.500a2.500 2.500 0 0 1 5 0V6" fill="none" stroke="#8a8a8a" stroke-width="1.500"/><rect x="1" y="6" width="9" height="7" fill="#8a8a8a"/></svg>
              <span class="ml-[26px] w-[33px] text-[#8e8e8e]">填充:</span>
              <div class="w-[55px] h-[20px] flex border border-[#474747] rounded-r-[3px]">
                <div class="flex-1 bg-[#4a4a4a]"></div>
                <div class="w-[19px] flex items-center justify-center bg-[#5c5c5c]"><svg width="7" height="4" viewBox="0 0 7 4"><path d="M0 0h7L3.500 4z" fill="#999"/></svg></div>
              </div>
            </div>
            <div class="flex-1 min-h-0 flex bg-[#444] border-t border-[#3a3a3a]">
              <div class="flex-1"></div>
              <div class="w-[15px] bg-[#4c4c4c] border-l border-[#444]"></div>
            </div>
            <div class="h-[19px] shrink-0 flex items-center justify-end gap-[13px] pr-[29px] bg-[#535353] border-t-2 border-[#3a3a3a]">
              <svg width="14" height="10" viewBox="0 0 14 10" fill="none" stroke="#7e7e7e" stroke-width="1.500"><path d="M5 1.500H4a3.500 3.500 0 0 0 0 7h1M9 1.500h1a3.500 3.500 0 0 1 0 7H9M4 5h6"/></svg>
              <span class="w-[14px] text-center font-['Liberation_Serif',serif] italic text-[13px] leading-[13px] text-[#7e7e7e]">fx</span>
              <svg width="14" height="10" viewBox="0 0 14 10"><rect width="14" height="10" fill="#7e7e7e"/><circle cx="7" cy="5" r="2.500" fill="#444"/></svg>
              <svg width="14" height="12" viewBox="0 0 14 12"><circle cx="7" cy="6" r="5.500" fill="#7e7e7e"/><path d="M3 10L11 2A5.500 5.500 0 0 1 3 10z" fill="#555"/></svg>
              <svg width="14" height="11" viewBox="0 0 14 11" fill="#7e7e7e"><path d="M1 0h5l1 2h6v8H1z"/></svg>
              <svg width="14" height="12" viewBox="0 0 14 12"><path d="M0 1h11v10H5l-5-4z" fill="#7e7e7e"/><path d="M1 8h4v3" fill="none" stroke="#444"/></svg>
              <svg width="14" height="12" viewBox="0 0 14 12" fill="none" stroke="#7e7e7e"><path d="M1.500 3h11M5 3V1h4v2M3 3v8.500h8V3M5.500 5v5M8.500 5v5"/></svg>
            </div>
          </div>
        </div>
      </div>
    </aside>
  </main>

  <!-- windows taskbar -->
  <footer class="relative flex-1 flex items-center justify-center pt-[2px] bg-linear-to-r from-[#ead6d6] via-[#dfe3e6] via-40% to-[#e6e6e6]">
    <svg class="absolute left-[32px] top-[26px]" width="48" height="44" viewBox="0 0 48 44">
      <defs><linearGradient id="wg" x1="0" y1="0" x2="0" y2="1"><stop offset="0" stop-color="#0f7fd2"/><stop offset="1" stop-color="#0a4f9e"/></linearGradient></defs>
      <rect width="48" height="44" rx="2" fill="url(#wg)"/>
      <rect x="4" y="4" width="18" height="36" rx="1" fill="#f4f4f4"/>
      <rect x="26" y="4" width="18" height="20" fill="#66d2ff"/>
      <rect x="26" y="24" width="18" height="8" fill="#2db2ff"/>
      <rect x="26" y="32" width="18" height="8" fill="#0086ea"/>
    </svg>

    <div class="w-[88px] h-[96px] flex items-center justify-center">
      <svg width="46" height="46" viewBox="0 0 46 46">
        <defs><linearGradient id="sg" x1="0" y1="0" x2="1" y2="1"><stop offset="0" stop-color="#55cdff"/><stop offset="1" stop-color="#0073d2"/></linearGradient></defs>
        <path d="M2 0h20v22H0V2a2 2 0 0 1 2-2zM24 0h20a2 2 0 0 1 2 2v20H24zM0 24h22v22H2a2 2 0 0 1-2-2zM24 24h22v20a2 2 0 0 1-2 2H24z" fill="url(#sg)"/>
      </svg>
    </div>
    <div class="w-[88px] h-[96px] flex items-center justify-center">
      <svg width="46" height="46" viewBox="0 0 46 46" fill="none" stroke="#262626" stroke-linecap="round"><circle cx="28" cy="18" r="15" stroke-width="5" transform="rotate(15 28 18)"/><path d="M17 30L5 44" stroke-width="5.500"/></svg>
    </div>
    <div class="w-[88px] h-[96px] flex items-center justify-center">
      <svg width="48" height="46" viewBox="0 0 48 46">
        <defs><linearGradient id="tg" x1="0" y1="0" x2="0" y2="1"><stop offset="0" stop-color="#4a4a4a"/><stop offset="1" stop-color="#161616"/></linearGradient></defs>
        <rect x="0" y="12" width="36" height="33" rx="2" fill="url(#tg)"/>
        <rect x="12" y="0" width="35" height="32" rx="1" fill="#f6f6f6" fill-opacity=".8"/>
      </svg>
    </div>
    <div class="w-[88px] h-[96px] flex items-center justify-center">
      <svg width="48" height="44" viewBox="0 0 48 44">
        <path d="M0 2a2 2 0 0 1 2-2h15l4 5h27v8H0z" fill="#e0a200"/>
        <path d="M0 8h46a2 2 0 0 1 2 2v32a2 2 0 0 1-2 2H2a2 2 0 0 1-2-2z" fill="#fdd45e"/>
        <path d="M8 44V30a6 6 0 0 1 6-6h20a6 6 0 0 1 6 6v14z" fill="#0f7fd2"/>
        <path d="M14 32h20" stroke="#0a4f9e" stroke-width="2"/>
      </svg>
    </div>
    <div class="relative w-[88px] h-[96px] flex items-center justify-center">
      <svg width="48" height="48" viewBox="0 0 48 48">
        <defs>
          <linearGradient id="eg" x1="0" y1="0" x2="1" y2="1"><stop offset="0" stop-color="#2fc4d8"/><stop offset="1" stop-color="#7ade5a"/></linearGradient>
          <linearGradient id="eb" x1="0" y1="0" x2="0" y2="1"><stop offset="0" stop-color="#1d94dd"/><stop offset="1" stop-color="#0a5aa8"/></linearGradient>
        </defs>
        <path d="M24 1C12 1 1 11 1 23c3-8 10-11 17-11 9 0 16 5 16 11 0 2-1 3-3 4 3 3 15 3 16-7C47 9 37 1 24 1z" fill="url(#eg)"/>
        <path d="M1 23c0 14 10 24 22 24 7 0 13-3 17-8-3 2-7 3-11 2-8-1-14-7-12-15 1-3 3-5 6-6-12-2-20 0-22 3z" fill="url(#eb)"/>
      </svg>
      <div class="absolute left-[38px] bottom-[9px] w-[12px] h-[6px] rounded-full bg-[#6e7276]"></div>
    </div>
    <div class="relative w-[88px] h-[96px] flex items-center justify-center">
      <svg width="46" height="48" viewBox="0 0 46 48">
        <path d="M11 9V3a2 2 0 0 1 2-2h20a2 2 0 0 1 2 2v6" fill="none" stroke="#2cb8f2" stroke-width="3"/>
        <path d="M0 8h46v33a6 6 0 0 1-6 6H6a6 6 0 0 1-6-6z" fill="#17437c"/>
        <rect x="13" y="18" width="9" height="9" fill="#f25022"/><rect x="24" y="18" width="9" height="9" fill="#7fba00"/>
        <rect x="13" y="29" width="9" height="9" fill="#00a4ef"/><rect x="24" y="29" width="9" height="9" fill="#ffb900"/>
      </svg>
      <div class="absolute left-[38px] bottom-[9px] w-[12px] h-[6px] rounded-full bg-[#6e7276]"></div>
    </div>
    <div class="relative w-[88px] h-[96px] flex items-center justify-center">
      <svg width="48" height="48" viewBox="0 0 48 48">
        <path d="M18 0h12l2 7 6-3 7 9-5 5 3 6-3 6 5 5-7 9-6-3-2 7H18l-2-7-6 3-7-9 5-5-3-6 3-6-5-5 7-9 6 3z" fill="#6f767c"/>
        <circle cx="24" cy="24" r="13" fill="#e8eaec"/>
        <circle cx="24" cy="24" r="9" fill="#0a5fb0"/>
      </svg>
      <div class="absolute left-[38px] bottom-[9px] w-[12px] h-[6px] rounded-full bg-[#6e7276]"></div>
    </div>
    <div class="relative w-[88px] h-[96px] flex items-center justify-center">
      <div class="absolute left-[5px] top-[10px] w-[77px] h-[76px] rounded-[6px] bg-[#f2f3f5] border-b-2 border-[#d2d4d6]"></div>
      <div class="absolute left-[50px] top-[8px] w-[70px] h-[2px] bg-[#f2f3f5]"></div>
      <div class="relative w-[46px] h-[46px] bg-[#8fc2f2] p-[3px]">
        <div class="w-full h-[37px] bg-[#1e1e66] flex items-center justify-center text-[27px] leading-[30px] font-['Noto_Sans',sans-serif] font-semibold text-[#86bef2]">Ps</div>
      </div>
      <div class="absolute left-[28px] bottom-[5px] w-[32px] h-[6px] rounded-full bg-[#0a78d4]"></div>
    </div>

    <!-- tray -->
    <div class="absolute right-[41px] top-0 h-[98px] flex items-center text-[#1a1a1a]">
      <svg width="26" height="14" viewBox="0 0 26 14" fill="none" stroke="#1a1a1a" stroke-width="1.800"><path d="M1 13L13 1l12 12"/></svg>
      <span class="ml-[28px] w-[34px] text-[32px] leading-[32px] font-['Noto_Sans_CJK_SC',sans-serif] font-light">中</span>
      <svg class="ml-[27px]" width="32" height="24" viewBox="0 0 32 24" fill="none" stroke="#1a1a1a" stroke-width="2"><path d="M1 8c8-8 22-8 30 0M6 13c6-5 14-5 20 0M11 18c3-2 7-2 10 0"/><circle cx="16" cy="22" r="2" fill="#1a1a1a" stroke="none"/></svg>
      <svg class="ml-[16px]" width="32" height="26" viewBox="0 0 32 26" fill="none" stroke="#1a1a1a" stroke-width="2"><path d="M1 9v8h5l8 7V2L6 9z"/><path d="M19 9c2 2 2 6 0 8M23 6c3 4 3 10 0 14"/><path d="M27 2c4 6 4 16 0 22" stroke="#bbb"/></svg>
      <svg class="ml-[16px]" width="32" height="24" viewBox="0 0 32 24">
        <path d="M3 0v6M10 0v6" stroke="#1a1a1a" stroke-width="3"/>
        <path d="M0 6h13v3c0 3-3 4-5 4v10H6V13C3 13 0 12 0 9z" fill="#1a1a1a"/>
        <path d="M9 6h15a3 3 0 0 1 3 3v10a3 3 0 0 1-3 3H8" fill="none" stroke="#1a1a1a" stroke-width="2"/>
        <path d="M10 12l2-3h10v11H9z" fill="#1a1a1a"/>
        <rect x="28" y="11" width="4" height="6" rx="1" fill="#1a1a1a"/>
      </svg>
      <div class="ml-[28px] -mt-[3px] w-[112px] flex flex-col items-end text-[24px] leading-[32px] font-['Open_Sans',sans-serif] scale-x-[.96] origin-right whitespace-nowrap">
        <span>1:03</span>
        <span>2022/8/27</span>
      </div>
      <svg class="ml-[20px]" width="26" height="28" viewBox="0 0 26 28" fill="none" stroke="#1a1a1a" stroke-width="1.800"><path d="M13 1c8 1 12 7 12 13s-5 13-13 13c-5 0-9-2-11-6 8 1 16-9 12-20z"/></svg>
    </div>
  </footer>
</div>
</body>
</html>
